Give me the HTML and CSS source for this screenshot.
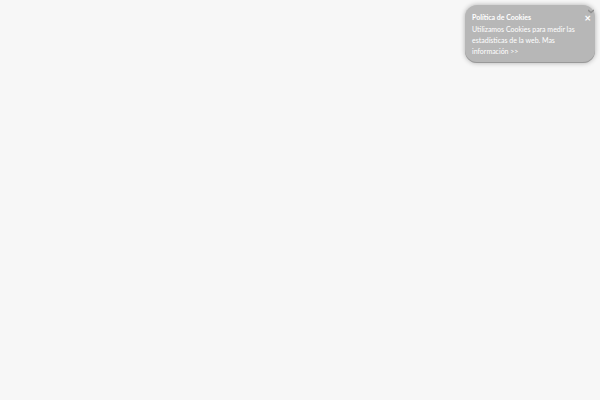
FILE: index.html
```html
<!DOCTYPE html>
<html lang="es">
<head>
<meta charset="utf-8">
<title>Política de Cookies</title>
<link rel="stylesheet" href="styles.css">
</head>
<body>
<aside class="notice" aria-labelledby="notice-title">
  <svg class="mark" viewBox="0 0 6 5" aria-hidden="true"><path d="M0 1 L3 3.5 L6 1" fill="none" stroke="#909090" stroke-width="1.5"/></svg>
  <button class="close" type="button">×</button>
  <h2 class="title" id="notice-title">Política de Cookies</h2>
  <p class="text"><a class="more" href="#">Utilizamos Cookies para medir las estadísticas de la web. Mas información &gt;&gt;</a></p>
</aside>
</body>
</html>
```
FILE: styles.css
```css
body {
  margin: 0;
  padding: 5px;
  display: flex;
  justify-content: flex-end;
  background: #f7f7f7;
  font-family: Lato, "Open Sans", sans-serif;
}

.notice {
  position: relative;
  box-sizing: border-box;
  width: 130px;
  padding: 7px 19px 6px 7px;
  border-radius: 12px;
  background: #b7b7b7;
  box-shadow: 0 0 5px rgba(0, 0, 0, 0.3), inset 0 -1px 0 #999;
  color: #fff;
  font-size: 7px;
  line-height: 11px;
}

.title,
.text {
  margin: 0;
  font-size: inherit;
}

.title {
  margin-bottom: 1px;
  font-weight: 700;
}

.more {
  color: inherit;
  text-decoration: none;
}

.close {
  position: absolute;
  top: 7px;
  right: 4px;
  padding: 0;
  border: 0;
  background: none;
  color: #fff;
  font: 700 11px/12px Lato, sans-serif;
}

.mark {
  position: absolute;
  top: 4px;
  right: 1px;
  width: 6px;
  height: 5px;
}
```
